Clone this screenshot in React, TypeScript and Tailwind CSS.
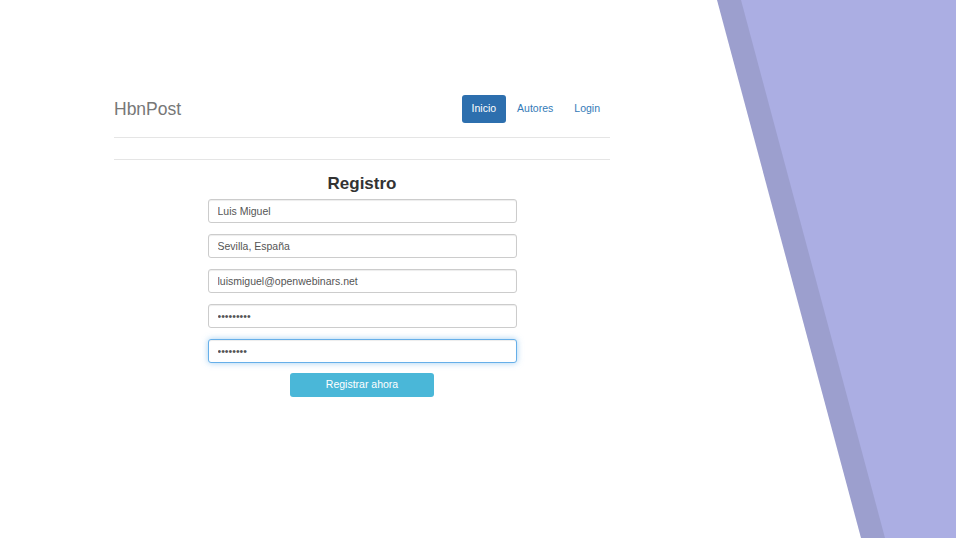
import React from "react";

const NAV = [
  { label: "Inicio", active: true },
  { label: "Autores", active: false },
  { label: "Login", active: false },
];

const FIELDS = [
  { type: "text", value: "Luis Miguel" },
  { type: "text", value: "Sevilla, España" },
  { type: "email", value: "luismiguel@openwebinars.net" },
  { type: "password", value: "123456789" },
];

export default function App() {
  return (
    <div
      className="relative w-[956px] h-[538px] overflow-hidden bg-white"
      style={{ fontFamily: '"Liberation Sans", Arial, sans-serif' }}
    >
      {/* decorative slide band */}
      <svg className="absolute inset-0" width="956" height="538" viewBox="0 0 956 538">
        <polygon points="717,0 956,0 956,538 861,538" fill="#9c9fce" />
        <polygon points="741,0 956,0 956,538 885,538" fill="#abaee3" />
      </svg>

      <div className="relative ml-[114px] w-[496px] pt-[95px]">
        <nav className="flex items-center justify-between h-[28px]">
          <span className="text-[17.5px] text-[#777] leading-none pt-[2px]">HbnPost</span>
          <ul className="flex items-center gap-[1px]">
            {NAV.map((n) => (
              <li
                key={n.label}
                className={`h-[28px] flex items-center px-[10px] rounded-[3px] text-[10.5px] ${
                  n.active ? "bg-[#2d6fae] text-white" : "text-[#337ab7]"
                }`}
              >
                {n.label}
              </li>
            ))}
          </ul>
        </nav>
        <div className="mt-[14px] border-t border-[#e5e5e5]" />
        <div className="mt-[21px] border-t border-[#e5e5e5]" />

        <h1 className="mt-[14px] text-center text-[17px] font-bold leading-[20px] text-[#333]">
          Registro
        </h1>

        <form className="mt-[5px] mx-auto w-[309px] flex flex-col gap-[11px]">
          {FIELDS.map((f) => (
            <input
              key={f.value}
              type={f.type}
              defaultValue={f.value}
              readOnly
              className="h-[24px] w-full rounded-[3px] border border-[#ccc] bg-white px-[9px] text-[10.5px] text-[#555] shadow-[inset_0_1px_1px_rgba(0,0,0,0.075)] outline-none"
            />
          ))}
          <input
            type="password"
            defaultValue="12345678"
            autoFocus
            className="h-[24px] w-full rounded-[3px] border border-[#66afe9] bg-white px-[9px] text-[10.5px] text-[#555] shadow-[inset_0_1px_1px_rgba(0,0,0,0.075),0_0_6px_rgba(102,175,233,0.6)] outline-none"
          />
          <div className="flex justify-center -mt-[1px]">
            <button
              type="button"
              className="h-[24px] w-[144px] rounded-[3px] bg-[#4ab7d8] text-[10.5px] text-white"
            >
              Registrar ahora
            </button>
          </div>
        </form>
      </div>
    </div>
  );
}
